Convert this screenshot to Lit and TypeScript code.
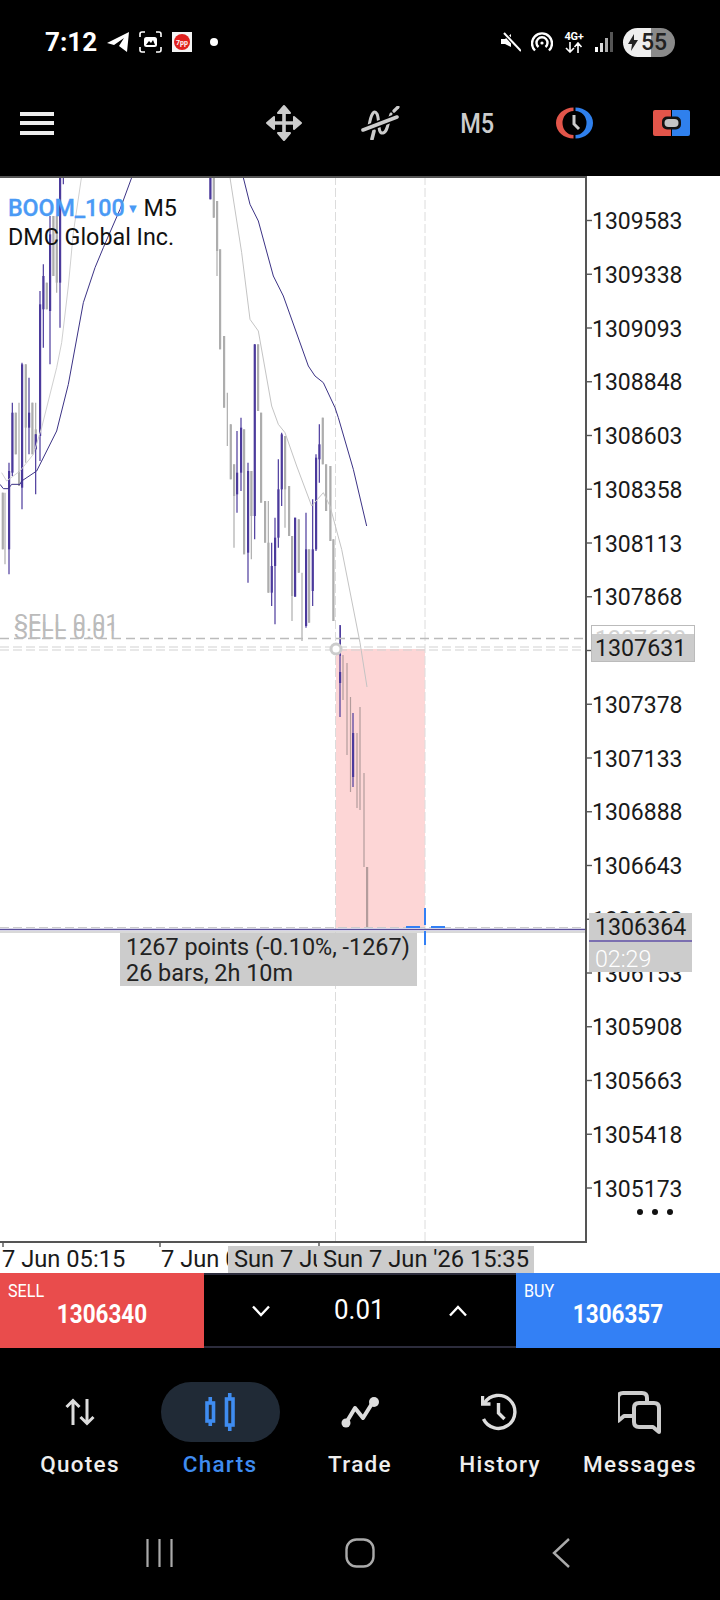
import { LitElement, css, html, svg } from "lit";
import { customElement } from "lit/decorators.js";

type Candle = [number, number, number, number, number];

const PURPLE = "#4b3a9c";
const GREY = "#adadad";
const CHART_TOP = 176;

// [x, wick top, wick bottom, body top, body bottom], in crop units (1/3 px)
const leftUp: Candle[] = [
  [27, 860, 1195, 885, 1120],
  [37, 680, 900, 710, 890],
  [66, 560, 1000, 565, 935],
  [87, 605, 835, 710, 755],
  [107, 775, 955, 775, 820],
  [120, 345, 855, 385, 780],
  [130, 265, 515, 300, 400],
  [150, 120, 565, 175, 405],
  [180, 0, 455, 0, 320],
  [190, 0, 25, 0, 0],
];
const leftDown: Candle[] = [
  [8, 950, 1120, 950, 1120],
  [15, 950, 1165, 950, 950],
  [47, 710, 835, 710, 835],
  [57, 680, 930, 885, 930],
  [77, 565, 860, 565, 755],
  [97, 680, 835, 680, 835],
  [107, 680, 820, 760, 820],
  [140, 320, 400, 320, 400],
  [160, 120, 300, 120, 300],
  [170, 120, 350, 120, 320],
];
const rightUp: Candle[] = [
  [1, 0, 70, 0, 70],
  [81, 765, 1010, 890, 955],
  [93, 725, 945, 755, 890],
  [114, 860, 1220, 885, 1130],
  [134, 505, 1090, 505, 1020],
  [185, 1100, 1290, 1170, 1250],
  [195, 1025, 1345, 1085, 1170],
  [205, 850, 1115, 940, 1085],
  [215, 770, 990, 775, 940],
  [255, 1025, 1262, 1025, 1262],
  [288, 1010, 1355, 1120, 1350],
  [308, 970, 1290, 1120, 1245],
  [318, 835, 1125, 845, 1120],
  [328, 745, 920, 805, 850],
  [391, 1348, 1440, 1348, 1348],
];
const rightDown: Candle[] = [
  [11, 0, 125, 0, 125],
  [21, 75, 300, 75, 225],
  [30, 220, 520, 220, 520],
  [42, 480, 695, 480, 695],
  [52, 650, 810, 750, 750],
  [62, 745, 910, 745, 910],
  [72, 865, 1115, 865, 960],
  [102, 760, 1135, 760, 1135],
  [124, 885, 1150, 885, 1020],
  [144, 505, 705, 505, 705],
  [153, 710, 980, 710, 980],
  [165, 975, 1100, 975, 1100],
  [175, 975, 1250, 1100, 1250],
  [225, 780, 1055, 780, 940],
  [237, 930, 1080, 930, 1080],
  [246, 1080, 1335, 1080, 1260],
  [266, 1030, 1190, 1030, 1190],
  [276, 1190, 1395, 1190, 1190],
  [297, 1120, 1340, 1120, 1340],
  [338, 725, 865, 725, 865],
  [348, 865, 1005, 865, 1005],
  [361, 870, 1095, 870, 1095],
  [370, 1090, 1335, 1090, 1335],
];
// candles inside the pink zone, in page px: [x, top, bottom, body top, body bottom]
const zoneUp: Candle[] = [
  [340, 625, 717, 672, 683],
  [353, 713, 787, 733, 777],
];
const zoneDown: Candle[] = [
  [343, 655, 700, 655, 655],
  [347, 663, 755, 663, 663],
  [350.5, 697, 792, 697, 697],
  [357, 733, 808, 733, 733],
  [360, 707, 810, 707, 707],
  [364, 773, 867, 773, 773],
  [367, 867, 928, 867, 928],
];

const crop = (list: Candle[], originX: number): Candle[] =>
  list.map(([x, a, b, c, d]) => [
    originX + x / 3,
    CHART_TOP + a / 3,
    CHART_TOP + b / 3,
    CHART_TOP + c / 3,
    CHART_TOP + d / 3,
  ]);

const points = (list: number[][], originX: number) =>
  list.map(([x, y]) => `${originX + x / 3},${CHART_TOP + y / 3}`).join(" ");

const maLeftGrey = [[5, 890], [20, 915], [60, 885], [100, 835], [125, 755], [170, 575], [185, 500], [205, 330], [220, 170], [245, 0]];
const maLeftPurple = [[0, 925], [10, 938], [25, 938], [35, 925], [60, 925], [65, 915], [110, 885], [170, 765], [205, 625], [250, 380], [285, 275], [310, 215], [360, 100], [395, 5]];
const maRightPurple = [[100, 5], [120, 85], [145, 135], [190, 300], [220, 360], [295, 570], [315, 600], [340, 620], [375, 695], [385, 725], [430, 880], [470, 1050]];
const maRightGrey = [[60, 5], [95, 230], [120, 430], [145, 465], [185, 690], [205, 745], [225, 770], [260, 870], [305, 990], [340, 950], [360, 990], [395, 1120], [450, 1400], [471, 1533]];

const prices = [
  1309583, 1309338, 1309093, 1308848, 1308603, 1308358, 1308113, 1307868, 1307623, 1307378,
  1307133, 1306888, 1306643, 1306398, 1306153, 1305908, 1305663, 1305418, 1305173,
];
const priceY = (i: number) => 220.5 + 53.75 * i - CHART_TOP;

const drawCandle = ([x, a, b, c, d]: Candle, color: string) => svg`
  <line x1=${x} x2=${x} y1=${a} y2=${b} stroke=${color} stroke-width="1.2"></line>
  ${d > c
    ? svg`<rect x=${x - 1} y=${c} width="2.2" height=${d - c} fill=${color}></rect>`
    : ""}
`;

@customElement("app-root")
export class AppRoot extends LitElement {
  static styles = css`
    :host {
      display: block;
      width: 720px;
      height: 1600px;
      background: #000;
      font-family: Roboto, "Liberation Sans", sans-serif;
      overflow: hidden;
    }
    svg {
      display: block;
    }
    .status {
      height: 84px;
      padding: 0 45px;
      box-sizing: border-box;
      display: flex;
      align-items: center;
      justify-content: space-between;
      color: #fff;
    }
    .status-left,
    .status-right {
      display: flex;
      align-items: center;
      gap: 10px;
    }
    .clock {
      font-size: 26px;
      font-weight: 700;
      width: 52px;
    }
    .dot {
      width: 8px;
      height: 8px;
      margin-left: 8px;
      border-radius: 50%;
      background: #fff;
    }
    .net {
      width: 22px;
      font-size: 11px;
      font-weight: 700;
      line-height: 10px;
      text-align: center;
      letter-spacing: -0.3px;
    }
    .battery {
      width: 52px;
      height: 29px;
      border-radius: 15px;
      background: linear-gradient(90deg, #eee 0 28px, #8a8a8a 28px);
      display: flex;
      align-items: center;
      gap: 3px;
      padding-left: 5px;
      box-sizing: border-box;
      color: #222;
      font-size: 23px;
      font-weight: 500;
    }
    .toolbar {
      height: 92px;
      padding-bottom: 14px;
      box-sizing: border-box;
      display: flex;
      align-items: center;
    }
    .menu {
      margin-left: 20px;
      margin-right: auto;
      width: 34px;
      display: flex;
      flex-direction: column;
      gap: 5.5px;
    }
    .menu span {
      height: 4px;
      background: #eee;
    }
    .tool {
      width: 97px;
      display: flex;
      justify-content: center;
      align-items: center;
    }
    .tf {
      color: #ccc;
      font-size: 28px;
      font-weight: 500;
      transform: scaleX(0.84);
    }
    .chart {
      position: relative;
      height: 1097px;
      background: #fff;
      overflow: hidden;
    }
    .chart svg.plot {
      position: absolute;
      inset: 0;
    }
    .legend {
      position: absolute;
      left: 8px;
      top: 18px;
      font-size: 23.3px;
      line-height: 28px;
      color: #111;
    }
    .symbol {
      color: #4a9af5;
      font-weight: 500;
      letter-spacing: -0.1px;
      -webkit-text-stroke: 0.3px #4a9af5;
    }
    .caret {
      color: #4a9af5;
      font-size: 13px;
      margin: 0 4px 0 2px;
      vertical-align: 3px;
    }
    .sell-tag {
      position: absolute;
      left: 14px;
      font-size: 23px;
      line-height: 24px;
      color: #bbb;
      letter-spacing: 0.3px;
    }
    .price {
      position: absolute;
      left: 592px;
      font-size: 23px;
      line-height: 28px;
      color: #1a1a1a;
    }
    .tag {
      position: absolute;
      background: #ccc;
      color: #1a1a1a;
      font-size: 23.2px;
      box-sizing: border-box;
    }
    .tag-open {
      left: 591px;
      top: 449px;
      width: 104px;
      height: 37px;
      background: #fff;
      border: 1.5px solid #bbb;
      overflow: hidden;
    }
    .tag-open .ghost {
      position: absolute;
      left: 3px;
      top: -1px;
      color: #d2d2d2;
      line-height: 28px;
    }
    .tag-open .fill {
      position: absolute;
      left: 0;
      right: 0;
      top: 7.5px;
      bottom: 0;
      background: #ccc;
      padding-left: 3px;
      line-height: 28px;
    }
    .tag-now {
      left: 589px;
      top: 737px;
      width: 103px;
      height: 59px;
      padding-left: 6px;
      line-height: 29px;
    }
    .tag-now .rule {
      height: 2px;
      margin-left: -6px;
      margin-top: -2px;
      background: #7b6fb0;
    }
    .tag-now .timer {
      color: #fff;
      font-weight: 300;
      margin-top: 4px;
      line-height: 26px;
    }
    .measure {
      position: absolute;
      left: 120px;
      top: 757px;
      width: 297px;
      height: 53px;
      padding: 1px 0 0 6px;
      line-height: 26px;
      font-size: 23.4px;
      color: #222;
    }
    .dots {
      position: absolute;
      left: 637px;
      top: 1033px;
      display: flex;
      gap: 9px;
    }
    .dots span {
      width: 6px;
      height: 6px;
      border-radius: 50%;
      background: #111;
    }
    .time {
      position: absolute;
      top: 1070px;
      height: 27px;
      font-size: 23.7px;
      line-height: 27px;
      color: #1a1a1a;
      white-space: nowrap;
      overflow: hidden;
      box-sizing: border-box;
    }
    .time-tag {
      background: #ccc;
    }
    .trade {
      height: 75px;
      display: grid;
      grid-template-columns: 204px 312px 204px;
      color: #fff;
    }
    .side {
      padding: 7px 0 0 8px;
      box-sizing: border-box;
      display: flex;
      flex-direction: column;
    }
    .sell {
      background: #e94c4c;
    }
    .buy {
      background: #3380f5;
    }
    .side-label {
      font-size: 19px;
      line-height: 22px;
      transform: scaleX(0.85);
      transform-origin: left;
    }
    .side-price {
      font-size: 25px;
      font-weight: 700;
      line-height: 30px;
      text-align: center;
      margin: -2px 0 0 -8px;
      transform: scaleX(0.9);
    }
    .volume {
      border-top: 2px solid #2c2c3c;
      border-bottom: 2px solid #2c2c3c;
      background: #000;
      padding: 0 49px 0 48px;
      display: flex;
      align-items: center;
      justify-content: space-between;
      font-size: 27px;
    }
    .volume span {
      transform: translateY(-1px) scaleX(0.96);
    }
    .tabs {
      height: 172px;
      padding: 34px 0 0 10px;
      box-sizing: border-box;
      display: grid;
      grid-template-columns: repeat(5, 140px);
      align-items: start;
    }
    .tab {
      display: flex;
      flex-direction: column;
      align-items: center;
      color: #eee;
      font-size: 22.5px;
      font-weight: 500;
      letter-spacing: 1.3px;
      line-height: 26px;
    }
    .tab-icon {
      width: 119px;
      height: 60px;
      border-radius: 30px;
      margin-bottom: 9px;
      display: flex;
      align-items: center;
      justify-content: center;
    }
    .tab.active {
      color: #3f8cf0;
    }
    .tab.active .tab-icon {
      background: #202a36;
    }
    .sysnav {
      height: 80px;
      padding-top: 18px;
      box-sizing: border-box;
      display: grid;
      grid-template-columns: repeat(3, 201px);
      justify-content: center;
      align-items: start;
      justify-items: center;
    }
  `;

  private plot() {
    return svg`
      <svg class="plot" width="720" height="1097" viewBox="0 176 720 1097">
        <defs>
          <clipPath id="plot-area"><rect x="0" y="177" width="586" height="1065"></rect></clipPath>
        </defs>
        <g clip-path="url(#plot-area)">
          <rect x="336" y="649" width="89" height="279" fill="#fdd6d6"></rect>
          <line x1="335.5" x2="335.5" y1="176" y2="1242" stroke="#dcdcdc" stroke-dasharray="9 3"></line>
          <line x1="425" x2="425" y1="176" y2="1242" stroke="#dcdcdc" stroke-dasharray="9 3"></line>
          ${crop(leftDown, 0).map((c) => drawCandle(c, GREY))}
          ${crop(rightDown, 210).map((c) => drawCandle(c, GREY))}
          ${zoneDown.map((c) => drawCandle(c, "#b39c9c"))}
          ${crop(leftUp, 0).map((c) => drawCandle(c, PURPLE))}
          ${crop(rightUp, 210).map((c) => drawCandle(c, PURPLE))}
          ${zoneUp.map((c) => drawCandle(c, PURPLE))}
          <polyline points=${points(maLeftGrey, 0)} fill="none" stroke="#d0d0d0"></polyline>
          <polyline points=${points(maRightGrey, 210)} fill="none" stroke="#c4c4c4"></polyline>
          <polyline points=${points(maLeftPurple, 0)} fill="none" stroke="#3b3285"></polyline>
          <polyline points=${points(maRightPurple, 210)} fill="none" stroke="#3b3285"></polyline>
          <line x1="0" x2="586" y1="638.5" y2="638.5" stroke="#bbb" stroke-width="1.6" stroke-dasharray="9 5"></line>
          <line x1="0" x2="586" y1="647" y2="647" stroke="#d2d2d2" stroke-width="1.2" stroke-dasharray="9 4"></line>
          <line x1="0" x2="586" y1="650" y2="650" stroke="#d2d2d2" stroke-width="1.2" stroke-dasharray="9 4"></line>
          <line x1="0" x2="586" y1="927.5" y2="927.5" stroke="#ccc" stroke-dasharray="9 4"></line>
          <line x1="0" x2="586" y1="929.5" y2="929.5" stroke="#5a4f9a" stroke-width="1.4"></line>
          <line x1="0" x2="586" y1="932" y2="932" stroke="#ccc" stroke-width="1.4"></line>
          <circle cx="336" cy="649" r="5" fill="#fff" stroke="#ccc" stroke-width="3"></circle>
          <path d="M425 908V925M425 931V945M406 927H420M431 927H445" stroke="#3380f5" stroke-width="2" fill="none"></path>
        </g>
        <path d="M0 177H586V1242H0" fill="none" stroke="#555" stroke-width="2"></path>
        ${prices.map((_, i) => {
          const y = priceY(i) + CHART_TOP;
          return svg`<line x1="586" x2="592" y1=${y} y2=${y} stroke="#555" stroke-width="1.4"></line>`;
        })}
        <path d="M3 1242v5M160 1242v5M319 1242v5" stroke="#555" stroke-width="1.4"></path>
      </svg>
    `;
  }

  render() {
    return html`
      <div class="status">
        <div class="status-left">
          <div class="clock">7:12</div>
          <svg width="22" height="20" viewBox="0 0 22 20">
            <path d="M0 11 22 0 20 20 12 14 17 6 7 13Z" fill="#fff"></path>
          </svg>
          <svg width="23" height="22" viewBox="0 0 23 22" fill="none">
            <path d="M1 6V3Q1 1 3 1H6M17 1H20Q22 1 22 3V6M22 16V19Q22 21 20 21H17M6 21H3Q1 21 1 19V16" stroke="#fff" stroke-width="1.6"></path>
            <rect x="5" y="6" width="13" height="10" rx="2.5" fill="#fff"></rect>
            <path d="M7 14 10 10 12 12 14 9 16 14Z" fill="#000"></path>
          </svg>
          <svg width="20" height="20" viewBox="0 0 20 20">
            <rect width="20" height="20" fill="#f4f4f4"></rect>
            <circle cx="10" cy="10" r="8" fill="#e0201e"></circle>
            <text x="10" y="12.5" font-size="7" font-weight="700" text-anchor="middle" fill="#fff" font-family="Roboto">7pp</text>
          </svg>
          <div class="dot"></div>
        </div>
        <div class="status-right">
          <svg width="20" height="20" viewBox="0 0 20 20" fill="none">
            <path d="M0 7H4L10 2V15L4 12H0Z" fill="#fff"></path>
            <path d="M3 1 20 19" stroke="#000" stroke-width="4"></path>
            <path d="M3 1 20 19" stroke="#fff" stroke-width="2"></path>
          </svg>
          <svg width="22" height="20" viewBox="0 0 22 20" fill="none" stroke="#fff" stroke-width="2.4">
            <path d="M4 18.5A10 10 0 1 1 18 18.5"></path>
            <path d="M7.5 15A5.5 5.5 0 1 1 14.5 15"></path>
            <circle cx="11" cy="11" r="1.6" fill="#fff" stroke="none"></circle>
          </svg>
          <div class="net">
            <div>4G+</div>
            <svg width="22" height="11" viewBox="0 0 22 11" fill="none" stroke="#fff" stroke-width="1.6">
              <path d="M7 0V10M3 6 7 10 11 6M15 11V1M11.5 5 15 1 18.5 5"></path>
            </svg>
          </div>
          <svg width="18" height="20" viewBox="0 0 18 20">
            <rect x="0" y="15" width="3" height="5" fill="#fff"></rect>
            <rect x="5" y="11" width="3" height="9" fill="#ddd"></rect>
            <rect x="10" y="6" width="3" height="14" fill="#aaa"></rect>
            <rect x="15" y="0" width="3" height="20" fill="#555"></rect>
          </svg>
          <div class="battery">
            <svg width="10" height="17" viewBox="0 0 10 17"><path d="M6 0 0 10H4L3 17 10 6H6Z" fill="#222"></path></svg>
            <span>55</span>
          </div>
        </div>
      </div>

      <div class="toolbar">
        <div class="menu"><span></span><span></span><span></span></div>
        <div class="tool">
          <svg width="38" height="38" viewBox="0 0 38 38" fill="#ccc" stroke="#ccc" stroke-linejoin="round">
            <path d="M19 8V30M8 19H30" stroke-width="3.6" fill="none"></path>
            <path d="M19 2 25 9H13ZM19 36 25 29H13ZM2 19 9 13V25ZM36 19 29 13V25Z" stroke-width="2"></path>
          </svg>
        </div>
        <div class="tool">
          <svg width="40" height="34" viewBox="0 0 40 34" fill="none" stroke-linecap="round">
            <path d="M11 33 13 25" stroke="#ccc" stroke-width="3.6"></path>
            <path d="M8 20C10 8 13 3 16 8 19 14 16 28 22 27 27 26 27 15 30 8" stroke="#ccc" stroke-width="3"></path>
            <path d="M2 24 36 11" stroke="#000" stroke-width="7"></path>
            <path d="M2 24 36 11" stroke="#ccc" stroke-width="3.6"></path>
            <path d="M33 5 37 1" stroke="#ccc" stroke-width="3.2"></path>
          </svg>
        </div>
        <div class="tool"><span class="tf">M5</span></div>
        <div class="tool">
          <svg width="37" height="32" viewBox="0 0 37 32">
            <path d="M17.5 0.5A17.5 15.5 0 0 0 17.5 31.5V28A11 12 0 0 1 17.5 4Z" fill="#e2554a"></path>
            <path d="M19.5 0.5A17.5 15.5 0 0 1 19.5 31.5V28A11 12 0 0 0 19.5 4Z" fill="#2f80ed"></path>
            <path d="M18 8V17L23 22" fill="none" stroke="#ccc" stroke-width="3"></path>
          </svg>
        </div>
        <div class="tool">
          <svg width="37" height="26" viewBox="0 0 37 26">
            <path d="M2 0H18V26H2Q0 26 0 24V2Q0 0 2 0Z" fill="#e2554a"></path>
            <path d="M19 0H35Q37 0 37 2V24Q37 26 35 26H19Z" fill="#2f80ed"></path>
            <rect x="9" y="6.5" width="19" height="13" rx="5" fill="#111"></rect>
            <rect x="11.5" y="9" width="14" height="8" rx="4" fill="#c4c4c4"></rect>
          </svg>
        </div>
      </div>

      <div class="chart">
        ${this.plot()}
        ${prices.map(
          (p, i) => html`<div class="price" style="top:${priceY(i) - 12.5}px">${p}</div>`,
        )}
        <div class="legend">
          <div><span class="symbol">BOOM_100</span><span class="caret">▼</span>M5</div>
          <div>DMC Global Inc.</div>
        </div>
        <div class="sell-tag" style="top:436px">SELL 0.01</div>
        <div class="sell-tag" style="top:444px">SELL 0.01</div>
        <div class="tag tag-open">
          <div class="ghost">1307623</div>
          <div class="fill">1307631</div>
        </div>
        <div class="tag tag-now">
          <div>1306364</div>
          <div class="rule"></div>
          <div class="timer">02:29</div>
        </div>
        <div class="tag measure">
          <div>1267 points (-0.10%, -1267)</div>
          <div>26 bars, 2h 10m</div>
        </div>
        <div class="dots"><span></span><span></span><span></span></div>
        <div class="time" style="left:2px">7 Jun 05:15</div>
        <div class="time" style="left:161px;width:70px">7 Jun 05:45</div>
        <div class="time time-tag" style="left:228px;width:89px;padding-left:6px">Sun 7 Jun '26 15:05</div>
        <div class="time time-tag" style="left:317px;width:217px;padding-left:6px">Sun 7 Jun '26 15:35</div>
      </div>

      <div class="trade">
        <div class="side sell">
          <div class="side-label">SELL</div>
          <div class="side-price">1306340</div>
        </div>
        <div class="volume">
          <svg width="18" height="12" viewBox="0 0 18 12" fill="none" stroke="#fff" stroke-width="2.4"><path d="M1 1.5 9 10 17 1.5"></path></svg>
          <span>0.01</span>
          <svg width="18" height="12" viewBox="0 0 18 12" fill="none" stroke="#fff" stroke-width="2.4"><path d="M1 10.5 9 2 17 10.5"></path></svg>
        </div>
        <div class="side buy">
          <div class="side-label">BUY</div>
          <div class="side-price">1306357</div>
        </div>
      </div>

      <div class="tabs">
        <div class="tab">
          <div class="tab-icon">
            <svg width="30" height="28" viewBox="0 0 30 28" fill="none" stroke="#ddd" stroke-width="3">
              <path d="M8 27V3M1.5 9 8 2.5 14.5 9M22 1V25M15.5 19 22 25.5 28.5 19"></path>
            </svg>
          </div>
          Quotes
        </div>
        <div class="tab active">
          <div class="tab-icon">
            <svg width="30" height="38" viewBox="0 0 30 38" fill="none" stroke="#3f8cf0" stroke-width="3.6">
              <path d="M5.25 4V10M5.25 28V33M24.75 0V6M24.75 32V38"></path>
              <rect x="2" y="10" width="6.5" height="18"></rect>
              <rect x="21.5" y="6" width="6.5" height="26"></rect>
            </svg>
          </div>
          Charts
        </div>
        <div class="tab">
          <div class="tab-icon">
            <svg width="38" height="31" viewBox="0 0 38 31" fill="none" stroke="#ddd" stroke-width="4" stroke-linejoin="round">
              <path d="M5 26 14 11 22 21 32 5"></path>
              <circle cx="5" cy="26" r="4.5" fill="#ddd" stroke="none"></circle>
              <circle cx="33" cy="5" r="5" fill="#ddd" stroke="none"></circle>
            </svg>
          </div>
          Trade
        </div>
        <div class="tab">
          <div class="tab-icon">
            <svg width="38" height="38" viewBox="1.5 0 38 38" fill="none" stroke="#ddd" stroke-width="3.4">
              <path d="M5 10A16.5 16.5 0 1 1 4 26"></path>
              <path d="M3 3V11H11"></path>
              <path d="M19 10V20L25 26"></path>
            </svg>
          </div>
          History
        </div>
        <div class="tab">
          <div class="tab-icon">
            <svg width="45" height="43" viewBox="2 0 45 43" fill="none" stroke="#ccc" stroke-width="4" stroke-linejoin="round">
              <path d="M31 11V7Q31 2 26 2H7Q2 2 2 7V30L8 25H18"></path>
              <path d="M23 12H38Q43 12 43 17V41L37 36H23Q18 36 18 31V17Q18 12 23 12Z"></path>
            </svg>
          </div>
          Messages
        </div>
      </div>

      <div class="sysnav">
        <svg width="27" height="30" viewBox="0 0 27 30" fill="none" stroke="#aaa" stroke-width="2.2">
          <path d="M1.5 1V29M13.5 1V29M25.5 1V29"></path>
        </svg>
        <svg width="30" height="30" viewBox="0 0 30 30" fill="none" stroke="#aaa" stroke-width="2.4">
          <rect x="1.5" y="1.5" width="27" height="27" rx="10"></rect>
        </svg>
        <svg width="20" height="30" viewBox="0 0 20 30" fill="none" stroke="#aaa" stroke-width="2.4">
          <path d="M18 1 3 15 18 29"></path>
        </svg>
      </div>
    `;
  }
}
